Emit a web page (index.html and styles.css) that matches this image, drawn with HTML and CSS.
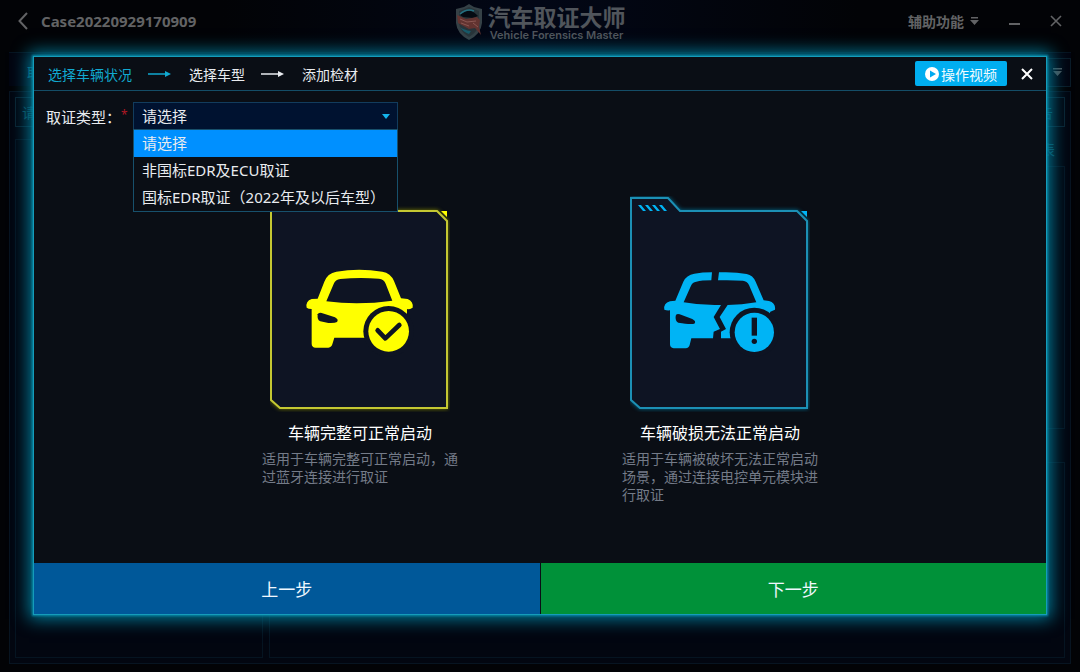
FILE: index.html
```html
<!DOCTYPE html>
<html lang="zh-CN">
<head>
<meta charset="utf-8">
<title>汽车取证大师</title>
<link rel="stylesheet" href="styles.css">
</head>
<body>
<div class="app">
  <header class="topbar">
    <div class="case">
      <button class="icon-btn" aria-label="返回"><svg width="10" height="18" viewBox="0 0 10 18"><path d="M9 1 1.500 9 9 17" fill="none" stroke="currentColor" stroke-width="2"/></svg></button>
      <span class="case-name">Case20220929170909</span>
    </div>
    <div class="brand">
      <svg width="28" height="38" viewBox="0 0 28 38">
        <path d="M14 1 19 4 27 6V20Q26 31 14 37 2 31 1 20V6L9 4Z" fill="#354146"/>
        <path d="M14 4 24 8V20Q23 29 14 34 5 29 4 20V8Z" fill="#283439"/>
        <path d="M5 12Q14 3 23 13L18 15 8 14Z" fill="#050b12"/>
        <path d="M5 11Q12 5 19 8" stroke="#247080" stroke-width="1.500" fill="none"/>
        <path d="M2 12 11 16 22 14 25 17 24 24 26 32 20 25 14 26 3 20Z" fill="#623330"/>
        <path d="M5 16 12 19 21 18M6 20 14 23M18 20 23 24" stroke="#8a5752" fill="none"/>
        <path d="M5 24Q9 27 16 28L14 31Q8 29 5 24Z" fill="#175a68"/>
      </svg>
      <div class="brand-text">
        <span class="brand-cn">汽车取证大师</span>
        <span class="brand-en">Vehicle Forensics Master</span>
      </div>
    </div>
    <div class="tools">
      <button class="icon-btn assist">辅助功能 <svg width="9" height="8" viewBox="0 0 9 8"><path d="M1 0H8V1.500H1ZM0 3H9L4.500 8Z" fill="currentColor"/></svg></button>
      <button class="icon-btn" aria-label="最小化"><svg width="11" height="12" viewBox="0 0 11 12"><path d="M0 9H11" stroke="currentColor" stroke-width="2"/></svg></button>
      <button class="icon-btn" aria-label="关闭"><svg width="12" height="12" viewBox="0 0 12 12"><path d="M1 1 11 11M11 1 1 11" stroke="currentColor" stroke-width="1.600"/></svg></button>
    </div>
  </header>
  <div class="tabs">
    <span class="tab">取</span>
    <span class="tab-menu"><svg width="9" height="8" viewBox="0 0 9 8"><path d="M0 0H9V1.500H0ZM0 3H9L4.500 8Z" fill="currentColor"/></svg></span>
  </div>
  <main class="workspace">
    <div class="filter"><span>请</span><span>告</span></div>
    <div class="columns">
      <div class="pane"></div>
      <div class="detail">
        <span class="detail-head">表</span>
        <div class="pane upper"></div>
        <div class="pane lower"></div>
      </div>
    </div>
  </main>
</div>

<div class="overlay">
  <section class="dialog" role="dialog" aria-label="选择车辆状况">
    <header class="dialog-head">
      <ol class="steps">
        <li class="step current">选择车辆状况 <svg class="arrow" width="23" height="8" viewBox="0 0 23 8"><path d="M0 4H18" stroke="currentColor" stroke-width="1.500"/><path d="M17 1 23 4 17 7Z" fill="currentColor"/></svg></li>
        <li class="step">选择车型 <svg class="arrow" width="23" height="8" viewBox="0 0 23 8"><path d="M0 4H18" stroke="currentColor" stroke-width="1.500"/><path d="M17 1 23 4 17 7Z" fill="currentColor"/></svg></li>
        <li class="step">添加检材</li>
      </ol>
      <div class="head-actions">
        <button class="video"><svg width="14" height="14" viewBox="0 0 14 14"><circle cx="7" cy="7" r="7" fill="#fff"/><path d="M5 3.500 11 7 5 10.500Z" fill="#00aaf0"/></svg>操作视频</button>
        <button class="close" aria-label="关闭"><svg width="12" height="12" viewBox="0 0 12 12"><path d="M1 1 11 11M11 1 1 11" stroke="currentColor" stroke-width="2"/></svg></button>
      </div>
    </header>
    <div class="dialog-body">
      <div class="field">
        <label for="kind">取证类型：<span class="required">*</span></label>
        <div class="picker">
          <select id="kind">
            <option>请选择</option>
          </select>
          <svg class="caret" width="8" height="5" viewBox="0 0 8 5"><path d="M0 0H8L4 5Z" fill="#14b4ec"/></svg>
          <ul class="menu" role="listbox" aria-label="取证类型">
            <li class="option active" role="option" aria-selected="true">请选择</li>
            <li class="option" role="option">非国标EDR及ECU取证</li>
            <li class="option" role="option">国标EDR取证（2022年及以后车型）</li>
          </ul>
        </div>
      </div>
      <div class="cards">
        <article class="card yellow">
          <svg class="folder" width="180" height="216" viewBox="1 0 180 216">
            <path class="outline" d="M2 2H39L51 15H168L178 25V212H11L2 204Z"/>
            <path class="solid" d="M172 15H178V21ZM9 9H12L17 15H14ZM16 9H19L24 15H21ZM23 9H26L31 15H28ZM30 9H33L38 15H35Z"/>
            <g transform="translate(-14 -1) scale(.3333)">
              <path class="solid" d="M155 338Q151 318 170 312L188 311 208 260Q218 234 244 230 312 219 382 230 407 234 417 258L438 310 458 312Q476 320 473 338 462 344 456 342V358L440 428H238L232 448Q230 457 220 458H182Q170 457 170 446V342Q160 342 155 338Z"/>
              <path class="hole" d="M214 319 236 267Q241 254 256 252 312 246 372 251 387 253 392 266L412 317Q312 331 214 319Z"/>
              <path class="hole" d="M188 358Q190 352 200 354L240 367Q252 374 246 381 240 385 220 384L196 379Q186 376 188 358Z"/>
              <circle class="hole" cx="401" cy="409" r="76"/>
              <circle class="solid" cx="401" cy="409" r="61"/>
              <path class="tick" d="M368 406 391 430 433 390"/>
            </g>
          </svg>
          <h3>车辆完整可正常启动</h3>
          <p>适用于车辆完整可正常启动，通过蓝牙连接进行取证</p>
        </article>
        <article class="card blue">
          <svg class="folder" width="180" height="216" viewBox="1 0 180 216">
            <path class="outline" d="M2 2H39L51 15H168L178 25V212H11L2 204Z"/>
            <path class="solid" d="M172 15H178V21ZM9 9H12L17 15H14ZM16 9H19L24 15H21ZM23 9H26L31 15H28ZM30 9H33L38 15H35Z"/>
            <g transform="translate(-14 -11) scale(.3333)">
              <path class="solid" d="M148 374Q145 354 165 349L181 347 205 290Q214 270 238 266 262 262 291 262L289 286Q260 286 244 290 232 292 228 302L206 352Q260 362 318 360L296 396 315 432 296 440 294 460H229L224 480Q222 489 212 490H176Q165 489 165 478V376Q155 377 148 374Z"/>
              <path class="solid" d="M312 262Q360 260 395 267 414 271 422 290L446 346 462 348Q483 354 480 374L466 380 440 460H318V440L333 432 314 396 338 360Q380 360 424 352L402 300Q396 288 384 287 350 285 309 286Z"/>
              <path class="hole" d="M182 393Q183 385 194 388L232 402Q245 409 238 416 225 419 190 413 180 409 182 393Z"/>
              <circle class="hole" cx="418" cy="442" r="74"/>
              <circle class="solid" cx="418" cy="442" r="59"/>
              <path class="mark" d="M410 398H426V452H410Z"/>
              <circle class="mark" cx="418" cy="469" r="8"/>
            </g>
          </svg>
          <h3>车辆破损无法正常启动</h3>
          <p>适用于车辆被破坏无法正常启动场景，通过连接电控单元模块进行取证</p>
        </article>
      </div>
    </div>
    <footer class="dialog-foot">
      <button class="prev">上一步</button>
      <button class="next">下一步</button>
    </footer>
  </section>
</div>
</body>
</html>
```
FILE: styles.css
```css
* { box-sizing: border-box; }
body {
  margin: 0;
  background: #020306;
  color: #e8ebef;
  font-family: "Noto Sans", "Noto Sans CJK SC", sans-serif;
  font-size: 15px;
}
button { border: 0; padding: 0; background: none; font: inherit; color: inherit; cursor: pointer; }
svg { display: block; flex: none; }

.app { min-height: 100vh; display: flex; flex-direction: column; padding: 0 9px 8px; color: #0d4858; }
.topbar {
  height: 52px;
  display: grid;
  grid-template-columns: 1fr auto 1fr;
  align-items: center;
  padding: 0 9px 10px;
  color: #626365;
  background: linear-gradient(90deg, transparent 20%, #020716 50%, transparent 80%);
}
.case { display: flex; align-items: center; gap: 13px; }
.case-name { font-size: 15px; line-height: 20px; font-weight: 700; }
.icon-btn { display: flex; align-items: center; }
.brand { display: flex; align-items: center; gap: 5px; padding-top: 2px; color: #50555b; }
.brand-text { display: flex; flex-direction: column; align-items: center; }
.brand-cn { font-family: "Noto Sans CJK SC", sans-serif; font-size: 23px; line-height: 27px; font-weight: 700; }
.brand-en { font-family: Inter, sans-serif; font-size: 11px; line-height: 11px; font-weight: 600; }
.tools { display: flex; align-items: center; justify-content: flex-end; gap: 30px; }
.assist { gap: 6px; font-size: 14px; font-weight: 700; }
.tabs { height: 34px; display: flex; align-items: center; justify-content: space-between; border-top: 1px solid #06131f; padding: 5px 0 0 18px; background: #020510; }
.tab { color: #086880; font-size: 14px; }
.tab-menu { height: 29px; width: 34px; display: flex; align-items: center; justify-content: flex-end; padding-right: 8px; border: 1px solid #0a1c28; color: #4d5357; }
.workspace { flex: 1; display: flex; flex-direction: column; margin-top: 5px; padding: 5px; border: 1px solid #071421; background: #020610; }
.filter { height: 30px; display: flex; align-items: center; justify-content: space-between; padding: 0 11px 0 6px; border: 1px solid #0a2230; font-size: 14px; }
.columns { flex: 1; display: grid; grid-template-columns: 248px 1fr; gap: 6px; margin-top: 12px; }
.pane { border: 1px solid #051421; }
.detail { display: grid; grid-template-rows: 27px 263px 1fr; }
.detail-head { justify-self: end; padding-right: 10px; font-size: 14px; }
.lower { margin-top: 33px; }
.upper { min-height: 0; }

.overlay { position: absolute; inset: 0; display: flex; padding: 56px 33px 57px; }
.dialog {
  flex: 1;
  display: flex;
  flex-direction: column;
  border: 1px solid #159cba;
  background: #0a0e15;
  box-shadow: 0 0 2px 1px #0787a5, 0 0 16px 4px #007c99;
}
.dialog-head { height: 34px; display: flex; align-items: center; justify-content: space-between; padding: 0 13px 0 14px; border-bottom: 1px solid #144d67; }
.steps { display: flex; align-items: center; gap: 18px; margin: 0; padding: 0; list-style: none; font-size: 14px; }
.step { display: flex; align-items: center; gap: 16px; }
.current { color: #11a9d0; }
.head-actions { display: flex; align-items: center; gap: 14px; }
.video { height: 25px; display: flex; align-items: center; gap: 2px; padding: 0 10px; border-radius: 2px; background: #00aef0; color: #effbff; font-size: 14px; }
.close { color: #fff; }

.dialog-body { flex: 1; padding: 11px 12px 0; }
.field { display: flex; align-items: center; }
.field label { display: flex; width: 87px; white-space: nowrap; }
.required { color: #b01824; font-size: 12px; }
.picker { position: relative; width: 265px; }
.picker select {
  display: block;
  width: 100%;
  height: 28px;
  padding: 0 8px;
  appearance: none;
  border: 1px solid #123c5d;
  border-radius: 0;
  background: #001230;
  color: inherit;
  font: inherit;
}
.caret { position: absolute; right: 8px; top: 12px; }
.menu { position: absolute; z-index: 1; top: 27px; left: 0; right: 0; margin: 0; padding: 0; list-style: none; border: 1px solid #17506c; background: #0a0e15; }
.option { height: 27px; padding: 0 8px; line-height: 27px; white-space: nowrap; }
.active { background: #0090ff; }

.cards { display: flex; justify-content: center; gap: 164px; margin-top: 66px; }
.card { width: 196px; display: flex; flex-direction: column; align-items: center; }
.card h3 { margin: 9px 0 5px; font-size: 16px; line-height: 24px; font-weight: 400; color: #fff; }
.card p { margin: 0; width: 100%; font-size: 14px; line-height: 18px; color: #747b88; }
.yellow { color: #ff0; }
.blue { color: #00b4f5; }
.outline { fill: #0e1423; stroke: #c4c832; stroke-width: 2; filter: drop-shadow(0 0 2px #777a00); }
.blue .outline { stroke: #1c90b5; filter: drop-shadow(0 0 2px #006a8d); }
.solid { fill: currentColor; }
.hole, .mark { fill: #0e1423; }
.tick { fill: none; stroke: #0e1423; stroke-width: 14; stroke-linecap: round; stroke-linejoin: round; }

.dialog-foot { display: grid; grid-template-columns: 1fr 1fr; gap: 1px; height: 51px; font-size: 17px; color: #f0f8ff; }
.prev { background: #005899; }
.next { background: #009139; }
```
